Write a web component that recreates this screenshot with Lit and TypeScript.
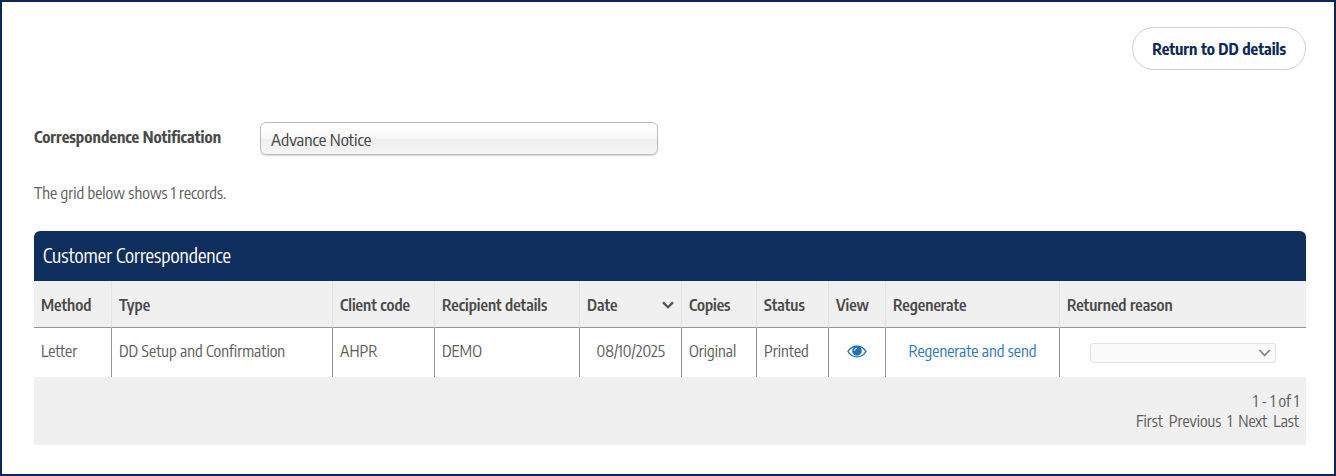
import { LitElement, html, css } from "lit";
import { customElement, state } from "lit/decorators.js";

interface Correspondence {
  method: string;
  type: string;
  client: string;
  recipient: string;
  date: string;
  copies: string;
  status: string;
}

const RECORDS: Correspondence[] = [
  {
    method: "Letter",
    type: "DD Setup and Confirmation",
    client: "AHPR",
    recipient: "DEMO",
    date: "08/10/2025",
    copies: "Original",
    status: "Printed",
  },
];

@customElement("app-root")
export class AppRoot extends LitElement {
  static styles = css`
    :host {
      display: block;
      box-sizing: border-box;
      min-height: 100vh;
      padding: 25px 28px 28px 32px;
      border: 2px solid #0c2663;
      background: #fff;
      color: #5e5e5e;
      font-family: "Encode Sans Condensed", "Liberation Sans Narrow", "Open Sans Condensed", "Liberation Sans", sans-serif;
      font-size: 16px;
      line-height: 20px;
    }
    * {
      box-sizing: border-box;
    }
    button,
    select {
      font: inherit;
      color: inherit;
      appearance: none;
    }
    .toolbar {
      display: flex;
      justify-content: flex-end;
    }
    .return {
      height: 43px;
      padding: 0 19px;
      border: 1px solid #cfcfcf;
      border-radius: 22px;
      background: #fff;
      color: #0b2a5b;
      font-weight: 700;
    }
    .filter {
      display: flex;
      align-items: center;
      gap: 40px;
      margin-top: 52px;
    }
    .filter label {
      width: 186px;
      padding-bottom: 4px;
      white-space: nowrap;
      color: #4a4a4a;
      font-weight: 700;
    }
    .notice {
      width: 398px;
      height: 33px;
      padding: 0 10px;
      border: 1px solid #bdbdbd;
      border-radius: 6px;
      background: linear-gradient(#fff 20%, #f6f6f6 50%, #eee 52%, #f4f4f4 100%);
      box-shadow: 0 1px 1px #d8d8d8;
      color: #444;
      font-size: 17px;
    }
    .summary {
      margin: 28px 0;
    }
    .title {
      margin: 0;
      padding: 14px 9px 16px;
      border-radius: 6px 6px 0 0;
      background: #0e2e5e;
      color: #fff;
      font-size: 19px;
      font-weight: 400;
    }
    table {
      width: 100%;
      border-collapse: separate;
      border-spacing: 0;
      table-layout: fixed;
    }
    .c57 { width: 57px; }
    .c72 { width: 72px; }
    .c75 { width: 75px; }
    .c78 { width: 78px; }
    .c102 { width: 102px; }
    .c145 { width: 145px; }
    .c174 { width: 174px; }
    .c221 { width: 221px; }
    th,
    td {
      padding: 0 7px;
      text-align: left;
      white-space: nowrap;
      border-right: 1px solid #959595;
    }
    th {
      height: 47px;
      padding-top: 1px;
      border-right-color: #e4e4e4;
      border-bottom: 1px solid #959595;
      background: #f0f0f0;
      color: #4a4a4a;
      font-size: 16px;
      font-weight: 600;
    }
    td {
      height: 49px;
      padding-bottom: 4px;
    }
    th:last-child,
    td:last-child {
      border-right: 0;
    }
    .sort {
      display: flex;
      align-items: center;
      justify-content: space-between;
      width: 100%;
      padding: 0;
      border: 0;
      background: none;
    }
    .date {
      padding-right: 16px;
      text-align: right;
    }
    .center {
      text-align: center;
    }
    svg {
      display: block;
    }
    .view {
      display: inline-block;
      vertical-align: middle;
      color: #2270b8;
    }
    .link {
      color: #2f78bd;
      text-decoration: none;
    }
    .picker {
      display: grid;
      align-items: center;
      margin: 4px 23px 0;
    }
    .picker > * {
      grid-area: 1 / 1;
    }
    .picker svg {
      justify-self: end;
      margin-right: 4px;
      pointer-events: none;
    }
    .reason {
      width: 100%;
      height: 20px;
      border: 1px solid #e2e2e2;
      border-radius: 3px;
      background: #fafafa;
    }
    .footer {
      padding: 14px 7px;
      background: #f0f0f0;
      text-align: right;
    }
    .pages {
      display: flex;
      justify-content: flex-end;
      gap: 6px;
    }
    .pages a {
      color: inherit;
      text-decoration: none;
    }
  `;

  @state() private descending = true;

  private toggleSort() {
    this.descending = !this.descending;
  }

  private row(r: Correspondence) {
    return html`
      <tr>
        <td>${r.method}</td>
        <td>${r.type}</td>
        <td>${r.client}</td>
        <td>${r.recipient}</td>
        <td class="date">${r.date}</td>
        <td>${r.copies}</td>
        <td>${r.status}</td>
        <td class="center">
          <a class="view" href="#view" aria-label="View letter">
            <svg width="20" height="14" viewBox="0 0 20 14" fill="none" stroke="currentColor">
              <path d="M1 6.5C5 -.6 15 -.6 19 6.5C15 13.6 5 13.6 1 6.5Z" stroke-width="1.4" />
              <circle cx="10" cy="5.9" r="4.8" fill="currentColor" stroke="none" />
              <path d="M7.3 5.8A2.8 2.8 0 0 1 9.8 3.2" stroke="#fff" stroke-width="1" />
            </svg>
          </a>
        </td>
        <td class="center"><a class="link" href="#regenerate">Regenerate and send</a></td>
        <td>
          <div class="picker">
            <select class="reason" aria-label="Returned reason"><option></option></select>
            <svg width="14" height="10" viewBox="0 0 14 10" fill="none" stroke="#858585" stroke-width="1.7">
              <path d="M1.4 2l5.2 5.4L11.8 2" />
            </svg>
          </div>
        </td>
      </tr>
    `;
  }

  render() {
    return html`
      <div class="toolbar"><button class="return" type="button">Return to DD details</button></div>
      <div class="filter">
        <label for="notice">Correspondence Notification</label>
        <select id="notice" class="notice"><option>Advance Notice</option></select>
      </div>
      <p class="summary">The grid below shows ${RECORDS.length} records.</p>
      <section>
        <h2 class="title">Customer Correspondence</h2>
        <table>
          <colgroup>
            <col class="c78" /><col class="c221" /><col class="c102" /><col class="c145" /><col class="c102" />
            <col class="c75" /><col class="c72" /><col class="c57" /><col class="c174" /><col />
          </colgroup>
          <thead>
            <tr>
              <th>Method</th>
              <th>Type</th>
              <th>Client code</th>
              <th>Recipient details</th>
              <th aria-sort=${this.descending ? "descending" : "ascending"}>
                <button class="sort" type="button" @click=${this.toggleSort}>
                  Date
                  <svg width="12" height="8" viewBox="0 0 12 8" fill="none" stroke="#555" stroke-width="2.2">
                    <path d=${this.descending ? "M1 1.4l5 4.8 5-4.8" : "M1 6.6l5-4.8 5 4.8"} />
                  </svg>
                </button>
              </th>
              <th>Copies</th>
              <th>Status</th>
              <th>View</th>
              <th>Regenerate</th>
              <th>Returned reason</th>
            </tr>
          </thead>
          <tbody>
            ${RECORDS.map((r) => this.row(r))}
          </tbody>
        </table>
        <div class="footer">
          <div>1 - 1 of 1</div>
          <nav class="pages" aria-label="Pages">
            <a href="#first">First</a><a href="#previous">Previous</a><a href="#1">1</a><a href="#next">Next</a><a href="#last">Last</a>
          </nav>
        </div>
      </section>
    `;
  }
}
